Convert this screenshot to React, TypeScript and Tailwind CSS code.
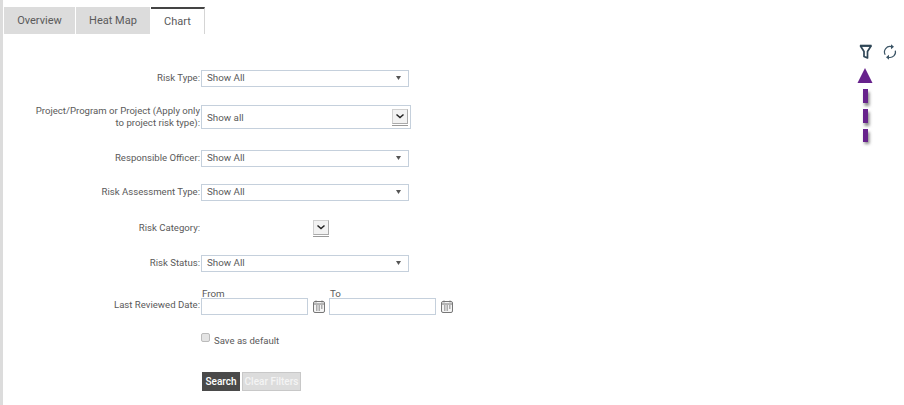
const font = "font-['Roboto','Liberation_Sans',sans-serif]";

function SelectBox({ value }: { value: string }) {
  return (
    <div className="flex h-[17px] w-[208px] items-center justify-between border border-[#c5d0dc] bg-white pb-px pl-[5px] pr-[7px] text-[9.8px] text-[#5a5a5a]">
      <span>{value}</span>
      <svg width="5" height="4" viewBox="0 0 5 4">
        <path d="M0 0h5L2.5 4z" fill="#555" />
      </svg>
    </div>
  );
}

function ChevronButton() {
  return (
    <div className="border-b border-[#999] pb-px">
      <div className="flex h-[15px] w-[16px] items-center justify-center border border-[#d0d0d0] border-b-[#aaa] border-r-[#aaa] bg-[#f2f2f2]">
        <svg width="10" height="7" viewBox="0 0 10 7">
          <path d="M1.500 1.500l3.500 3 3.500-3" fill="none" stroke="#222" strokeWidth="1.500" />
        </svg>
      </div>
    </div>
  );
}

function CalendarIcon() {
  return (
    <svg width="12" height="13" viewBox="0 0 12 13" className="shrink-0">
      <rect x="0.5" y="1.5" width="11" height="11" rx="1.5" fill="#f4f4f4" stroke="#777" />
      <path d="M0.5 4h11" stroke="#777" />
      <path d="M3 0.5v2M9 0.5v2" stroke="#777" />
      <path d="M3 6h1.500M5.500 6H7M8 6h1.500M3 8h1.500M5.500 8H7M8 8h1.500M5.500 10H7M3 10h1.500" stroke="#666" />
    </svg>
  );
}

function Row({
  label,
  children,
  className = "",
  labelClass = "pb-[2px]",
}: {
  label: React.ReactNode;
  children: React.ReactNode;
  className?: string;
  labelClass?: string;
}) {
  return (
    <div className={`flex items-center ${className}`}>
      <div className={`w-[201px] shrink-0 pr-px text-right text-[#5a5a5a] ${labelClass}`}>{label}</div>
      {children}
    </div>
  );
}

export default function App() {
  return (
    <div className={`relative h-[405px] w-[904px] overflow-hidden border-l-[3px] border-[#dcdcdc] bg-white text-[9.6px] leading-[12px] ${font}`}>
      <div className="ml-px mt-[7px] flex h-[27px] text-[11px] text-[#5a5a5a]">
        <div className="flex w-[71px] items-center justify-center bg-[#dcdcdc] pt-px">Overview</div>
        <div className="ml-px flex w-[74px] items-center justify-center bg-[#dcdcdc] pt-px">Heat Map</div>
        <div className="ml-px flex w-[54px] items-center justify-center border-r border-t-2 border-r-[#d5d5d5] border-t-[#444] bg-white">Chart</div>
      </div>

      <div className="-ml-[3px] mt-[36px]">
        <Row label="Risk Type:">
          <SelectBox value="Show All" />
        </Row>
        <Row
          className="mt-[18px]"
          labelClass=""
          label={
            <>
              Project/Program or Project (Apply only
              <br />
              to project risk type):
            </>
          }
        >
          <div className="flex h-[24px] w-[210px] items-center justify-between border border-[#c5d0dc] pl-[5px] pr-[2px] text-[9.8px] text-[#5a5a5a]">
            <span className="pt-[2px]">Show all</span>
            <ChevronButton />
          </div>
        </Row>
        <Row className="mt-[21px]" label="Responsible Officer:">
          <SelectBox value="Show All" />
        </Row>
        <Row className="mt-[17px]" label="Risk Assessment Type:">
          <SelectBox value="Show All" />
        </Row>
        <Row className="mt-[19px]" label="Risk Category:">
          <div className="ml-[112px]">
            <ChevronButton />
          </div>
        </Row>
        <Row className="mt-[18px]" label="Risk Status:">
          <SelectBox value="Show All" />
        </Row>
        <div className="mt-[16px] flex">
          <div className="w-[201px] shrink-0 pr-px pt-[11px] text-right text-[#5a5a5a]">Last Reviewed Date:</div>
          <div className="text-[9.8px] text-[#5a5a5a]">
            <div className="flex h-[10px]">
              <span className="w-[129px] pl-px">From</span>
              <span>To</span>
            </div>
            <div className="flex items-center">
              <div className="h-[17px] w-[107px] border border-[#c5d0dc]" />
              <div className="ml-[5px] mr-[4px]">
                <CalendarIcon />
              </div>
              <div className="h-[17px] w-[107px] border border-[#c5d0dc]" />
              <div className="ml-[5px]">
                <CalendarIcon />
              </div>
            </div>
          </div>
        </div>
        <div className="ml-[201px] mt-[17px] flex items-start text-[#5a5a5a]">
          <div className="mt-px h-[9px] w-[9px] rounded-[2px] border border-[#bbb] bg-[#e4e4e4]" />
          <span className="ml-[4px] mt-[3px]">Save as default</span>
        </div>
        <div className="ml-[202px] mt-[25px] flex gap-[2px] text-[10px]">
          <button className="flex h-[19px] w-[38px] items-center justify-center bg-[#4a4a4a] font-medium text-white">Search</button>
          <button className="flex h-[19px] w-[59px] items-center justify-center border border-[#c8c8c8] bg-[#dcdcdc] font-medium text-[#f4f4f4]">Clear Filters</button>
        </div>
      </div>

      {/* toolbar icons and annotation arrow sit over the page */}
      <svg className="absolute left-[850px] top-[40px]" width="51" height="110" viewBox="0 0 51 110">
        <defs>
          <filter id="soft" filterUnits="userSpaceOnUse" x="0" y="20" width="30" height="90">
            <feGaussianBlur stdDeviation="1.5" />
          </filter>
        </defs>
        <path d="M7.500 6h10.500l-3.500 5.500v6.500l-3.500-1.500v-5z" fill="none" stroke="#2f4656" strokeWidth="1.700" strokeLinejoin="round" />
        <path d="M7 5.700h11.500" stroke="#2f4656" strokeWidth="2" />
        <path d="M38.500 6.700A5.500 5.500 0 0 0 32.200 14.700M42.300 10.600A5.500 5.500 0 0 1 35.600 17.300" fill="none" stroke="#3c5566" strokeWidth="1.200" />
        <path d="M38 4.200l3 2.500-3 2.500zM36 14.800l-3 2.500 3 2.500z" fill="#3c5566" />
        <path d="M13 50v52" stroke="#888" strokeWidth="5" strokeDasharray="14 6" filter="url(#soft)" transform="translate(1 2)" />
        <path d="M12 28L19.500 43H4.500z" fill="#67228c" />
        <path d="M12.500 49v53" stroke="#67228c" strokeWidth="5" strokeDasharray="14 6" />
      </svg>
    </div>
  );
}
